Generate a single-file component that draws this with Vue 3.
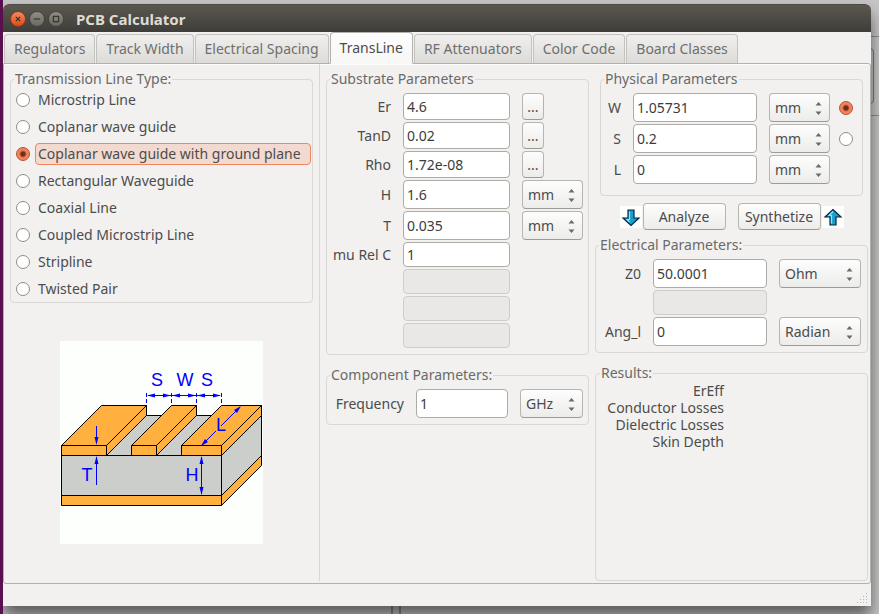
<script setup>
import { ref, reactive } from 'vue'

const tabs = [
  'Regulators', 'Track Width', 'Electrical Spacing', 'TransLine',
  'RF Attenuators', 'Color Code', 'Board Classes'
]
const activeTab = ref('TransLine')

const lineTypes = [
  'Microstrip Line', 'Coplanar wave guide', 'Coplanar wave guide with ground plane',
  'Rectangular Waveguide', 'Coaxial Line', 'Coupled Microstrip Line', 'Stripline', 'Twisted Pair'
]
const lineType = ref('Coplanar wave guide with ground plane')

const lengths = ['mm', 'cm', 'inch', 'mil']
const substrate = reactive([
  { id: 'er', label: 'Er', value: '4.6', kind: 'pick' },
  { id: 'tand', label: 'TanD', value: '0.02', kind: 'pick' },
  { id: 'rho', label: 'Rho', value: '1.72e-08', kind: 'pick' },
  { id: 'h', label: 'H', value: '1.6', kind: 'unit', unit: 'mm' },
  { id: 't', label: 'T', value: '0.035', kind: 'unit', unit: 'mm' },
  { id: 'mur', label: 'mu Rel C', value: '1', kind: 'plain' },
  { id: 's7', label: '', value: '', kind: 'off' },
  { id: 's8', label: '', value: '', kind: 'off' },
  { id: 's9', label: '', value: '', kind: 'off' }
])
const frequency = reactive({ value: '1', unit: 'GHz' })
const physical = reactive([
  { id: 'w', label: 'W', value: '1.05731', unit: 'mm', solvable: true },
  { id: 's', label: 'S', value: '0.2', unit: 'mm', solvable: true },
  { id: 'l', label: 'L', value: '0', unit: 'mm', solvable: false }
])
const solveFor = ref('w')
const electrical = reactive([
  { id: 'z0', label: 'Z0', value: '50.0001', kind: 'unit', unit: 'Ohm', units: ['Ohm', 'kOhm'] },
  { id: 'e2', label: '', value: '', kind: 'off' },
  { id: 'ang', label: 'Ang_l', value: '0', kind: 'unit', unit: 'Radian', units: ['Radian', 'Degree'] }
])
const results = ['ErEff', 'Conductor Losses', 'Dielectric Losses', 'Skin Depth']
</script>

<template>
  <div class="desktop">
    <div class="behind-right"></div>
    <div class="behind-tab"></div>
    <div class="behind-bottom"></div>
    <div class="window">
      <header class="titlebar">
        <button class="wm close" aria-label="Close">
          <svg viewBox="0 0 16 16"><path d="M5.500 5.500l5 5M10.500 5.500l-5 5" /></svg>
        </button>
        <button class="wm" aria-label="Minimize">
          <svg viewBox="0 0 16 16"><path d="M4.500 8h7" /></svg>
        </button>
        <button class="wm" aria-label="Maximize">
          <svg viewBox="0 0 16 16"><path d="M5 5h6v6h-6z" /></svg>
        </button>
        <h1>PCB Calculator</h1>
      </header>

      <nav class="tabs" role="tablist">
        <button
          v-for="tab in tabs" :key="tab" role="tab" class="tab"
          :class="{ active: tab === activeTab }" :aria-selected="tab === activeTab"
          @click="activeTab = tab"
        >{{ tab }}</button>
      </nav>

      <main class="panel">
        <section class="col types">
          <fieldset>
            <legend>Transmission Line Type:</legend>
            <div class="type-list">
              <label v-for="t in lineTypes" :key="t" class="type">
                <input v-model="lineType" type="radio" name="line-type" :value="t" />
                <span>{{ t }}</span>
              </label>
            </div>
          </fieldset>
          <div class="picture">
            <svg class="diagram" viewBox="0 0 203 203">
              <g stroke="#000" stroke-width="1">
                <path class="sub" d="M1.500 114.500L41.500 74.500H201.500V115.500L161.500 155.500H1.500z" />
                <path class="paper" d="M86.500 64V74.500H111.500L116 64z" stroke="none" />
                <path class="sub" d="M161.500 114.500L201.500 74.500V115.500L161.500 154.500z" />
                <path class="cu" d="M1.500 154.500H161.500V164.500H1.500z" />
                <path class="cu" d="M161.500 154.500L201.500 114.500V124.500L161.500 164.500z" />
                <path class="cu" d="M1.500 104.500L41.500 64.500H86.500L46.500 104.500z" />
                <path class="cu" d="M46.500 104.500L86.500 64.500V74.500L46.500 114.500z" />
                <path class="cu" d="M1.500 104.500H46.500V114.500H1.500z" />
                <path class="paper" d="M136.500 64V74.500H151.500L162 64z" stroke="none" />
                <path fill="none" d="M86.500 74.500H101.500M136.500 74.500H151.500" />
                <path class="cu" d="M71.500 104.500L111.500 64.500H136.500L96.500 104.500z" />
                <path class="cu" d="M96.500 104.500L136.500 64.500V74.500L96.500 114.500z" />
                <path class="cu" d="M71.500 104.500H96.500V114.500H71.500z" />
                <path class="cu" d="M121.500 104.500L161.500 64.500H201.500L161.500 104.500z" />
                <path class="cu" d="M161.500 104.500L201.500 64.500V74.500L161.500 114.500z" />
                <path class="cu" d="M121.500 104.500H161.500V114.500H121.500z" />
                <path fill="none" d="M1.500 114.500H161.500V154.500M1.500 114.500V154.500" />
              </g>
              <g stroke="#00f" stroke-width="1" fill="none">
                <path d="M86.500 52v13M111.500 52v13M136.500 52v13M161.500 52v13" stroke-dasharray="4 2" />
                <path d="M88 54.500H160" />
                <path d="M36.500 85V102M36.500 116V144M141.500 116V153" />
                <path d="M142 104L156 90M161 85L180 66" />
              </g>
              <g fill="#00f">
                <path d="M87 54.500l8-2v4zM111 54.500l-8-2v4zM112 54.500l8-2v4zM136 54.500l-8-2v4zM137 54.500l8-2v4zM161 54.500l-8-2v4z" />
                <path d="M36.500 104l-2-8h4zM36.500 115l-2 8h4zM141.500 115l-2 8h4zM141.500 154l-2-8h4z" />
                <path d="M141 105l4-7 3 3zM181 65l-7 4 3 3z" />
              </g>
              <g class="dim">
                <text x="97" y="45">S</text>
                <text x="125" y="45">W</text>
                <text x="147" y="45">S</text>
                <text x="161" y="90">L</text>
                <text x="27" y="140">T</text>
                <text x="132" y="140">H</text>
              </g>
            </svg>
          </div>
        </section>

        <section class="col middle">
          <fieldset>
            <legend>Substrate Parameters</legend>
            <div class="grid substrate">
              <template v-for="row in substrate" :key="row.id">
                <label :for="row.id">{{ row.label }}</label>
                <input :id="row.id" v-model="row.value" type="text" :class="row.kind" :disabled="row.kind === 'off'" />
                <button v-if="row.kind === 'pick'" class="btn pick" :aria-label="'Choose ' + row.label">...</button>
                <span v-else-if="row.kind === 'unit'" class="select">
                  <select v-model="row.unit" :aria-label="row.label + ' unit'">
                    <option v-for="u in lengths" :key="u">{{ u }}</option>
                  </select>
                  <svg viewBox="0 0 7 13"><path d="M3.500 0L6.500 3.500h-6zM3.500 13L.5 9.500h6z" /></svg>
                </span>
                <span v-else></span>
              </template>
            </div>
          </fieldset>
          <fieldset>
            <legend>Component Parameters:</legend>
            <div class="grid frequency">
              <label for="freq">Frequency</label>
              <input id="freq" v-model="frequency.value" type="text" class="unit" />
              <span class="select">
                <select v-model="frequency.unit" aria-label="Frequency unit">
                  <option>GHz</option>
                  <option>MHz</option>
                </select>
                <svg viewBox="0 0 7 13"><path d="M3.500 0L6.500 3.500h-6zM3.500 13L.5 9.500h6z" /></svg>
              </span>
            </div>
          </fieldset>
        </section>

        <section class="col right">
          <fieldset class="physical-box">
            <legend>Physical Parameters</legend>
            <div class="grid physical">
              <template v-for="row in physical" :key="row.id">
                <label :for="'p-' + row.id">{{ row.label }}</label>
                <input :id="'p-' + row.id" v-model="row.value" type="text" class="unit" />
                <span class="select">
                  <select v-model="row.unit" :aria-label="row.label + ' unit'">
                    <option v-for="u in lengths" :key="u">{{ u }}</option>
                  </select>
                  <svg viewBox="0 0 7 13"><path d="M3.500 0L6.500 3.500h-6zM3.500 13L.5 9.500h6z" /></svg>
                </span>
                <input v-if="row.solvable" v-model="solveFor" type="radio" name="solve" :value="row.id" :aria-label="'Solve for ' + row.label" />
                <span v-else></span>
              </template>
            </div>
          </fieldset>

          <div class="actions">
            <svg class="arrow" viewBox="0 0 22 22">
              <path d="M8 4h6v8h5l-8 7.500L3 12h5z" />
              <path class="shine" d="M9.500 5.500v8H7l2.500 2.500" />
            </svg>
            <button class="btn">Analyze</button>
            <button class="btn second">Synthetize</button>
            <svg class="arrow" viewBox="0 0 22 22">
              <path d="M8 19h6v-8h5l-8-7.500L3 11h5z" />
              <path class="shine" d="M9.500 17.500V9.500H7l4-4" />
            </svg>
          </div>

          <fieldset>
            <legend>Electrical Parameters:</legend>
            <div class="grid electrical">
              <template v-for="row in electrical" :key="row.id">
                <label :for="row.id">{{ row.label }}</label>
                <input :id="row.id" v-model="row.value" type="text" :class="row.kind" :disabled="row.kind === 'off'" />
                <span v-if="row.kind === 'unit'" class="select">
                  <select v-model="row.unit" :aria-label="row.label + ' unit'">
                    <option v-for="u in row.units" :key="u">{{ u }}</option>
                  </select>
                  <svg viewBox="0 0 7 13"><path d="M3.500 0L6.500 3.500h-6zM3.500 13L.5 9.500h6z" /></svg>
                </span>
                <span v-else></span>
              </template>
            </div>
          </fieldset>

          <fieldset class="results-box">
            <legend>Results:</legend>
            <ul class="results">
              <li v-for="r in results" :key="r">{{ r }}</li>
            </ul>
          </fieldset>
        </section>
      </main>

      <footer class="status">
        <svg class="grip" viewBox="0 0 12 12">
          <path d="M9 0h1v1h-1zM6 3h1v1H6zM9 3h1v1h-1zM3 6h1v1H3zM6 6h1v1H6zM9 6h1v1h-1zM0 9h1v1H0zM3 9h1v1H3zM6 9h1v1H6zM9 9h1v1h-1z" />
        </svg>
      </footer>
    </div>
  </div>
</template>

<style>
body {
  background: #c6c6c6;
}
</style>

<style scoped>
* {
  box-sizing: border-box;
}
.desktop {
  position: relative;
  display: flex;
  min-height: 100vh;
  padding: 4px 8px 8px 0;
  border-left: 3px solid #5a1050;
  overflow: hidden;
  font-family: "Noto Sans", sans-serif;
  font-size: 14px;
  line-height: 18px;
  color: #4c4c4c;
}
button, input, select {
  font: inherit;
  color: inherit;
  margin: 0;
}
.behind-right {
  position: absolute;
  top: 36px;
  right: 0;
  width: 40px;
  height: 80px;
  border-top: 1px solid #8e8e8e;
  border-bottom: 1px solid #8e8e8e;
}
.behind-tab {
  position: absolute;
  top: 48px;
  right: 5px;
  width: 20px;
  height: 56px;
  border: 1px solid #777;
  border-radius: 4px;
}
.behind-bottom {
  position: absolute;
  bottom: 0;
  left: 388px;
  width: 10px;
  height: 8px;
  border: solid #8c8c8c;
  border-width: 0 2px;
}
.window {
  position: relative;
  flex: 1;
  min-width: 0;
  display: flex;
  flex-direction: column;
  background: #f2f1ef;
  border-radius: 6px 6px 0 0;
  box-shadow: 0 10px 16px rgba(0, 0, 0, 0.55);
}
.titlebar {
  display: flex;
  align-items: center;
  gap: 3px;
  height: 28px;
  padding: 0 7px;
  border-radius: 6px 6px 0 0;
  border-top: 1px solid #4d4a44;
  background: linear-gradient(#5b584f, #3e3d39);
}
.titlebar h1 {
  margin: 0 0 0 9px;
  font-size: 15px;
  font-weight: 700;
  color: #dfdbd2;
}
.wm {
  width: 16px;
  height: 16px;
  padding: 0;
  border: 1px solid #45433c;
  border-radius: 50%;
  background: linear-gradient(#8f8d86, #6a6861);
}
.wm.close {
  border-color: #8a3a1c;
  background: linear-gradient(#f58a61, #df4a16);
}
.wm svg {
  display: block;
  width: 14px;
  height: 14px;
  fill: none;
  stroke: #37352f;
  stroke-width: 1.4;
}
.tabs {
  display: flex;
  align-items: flex-end;
  gap: 1px;
  height: 32px;
  padding-left: 1px;
}
.tab {
  height: 30px;
  padding: 0 9px;
  border: 1px solid #c4c2be;
  border-bottom-color: #b3b1ad;
  border-radius: 4px 4px 0 0;
  background: linear-gradient(#f0efed, #dddbd8);
  color: #6f6f6f;
  white-space: nowrap;
}
.tab.active {
  position: relative;
  height: 32px;
  border-color: #b3b1ad;
  border-bottom-color: #f9f9f8;
  background: linear-gradient(#fdfdfd, #f7f7f6);
  color: #4c4c4c;
}
.panel {
  flex: 1;
  display: grid;
  grid-template-columns: 316fr 274fr 276fr;
  margin-top: -1px;
  border: 1px solid #b3b1ad;
  border-radius: 0 3px 3px 3px;
  padding-bottom: 2px;
  box-shadow: inset 0 1px #fcfcfc;
}
.col {
  display: flex;
  flex-direction: column;
  gap: 11px;
  min-width: 0;
}
.types {
  gap: 0;
  padding: 6px 6px 0;
  border-right: 1px solid #d9d8d5;
}
.middle {
  padding: 6px 5px 0 6px;
}
.right {
  gap: 0;
  padding: 6px 2px 0 1px;
}
fieldset {
  min-width: 0;
  margin: 0;
  padding: 5px 5px 6px;
  border: 1px solid #d9d8d5;
  border-radius: 4px;
}
legend {
  margin-left: -2px;
  padding: 0 1px;
  line-height: 18px;
  color: #6a6a6a;
}
.types fieldset {
  padding: 1px 1px 2px 5px;
}
.type-list {
  display: grid;
  gap: 5px;
}
.type {
  display: flex;
  align-items: center;
  gap: 5px;
  height: 22px;
  white-space: nowrap;
}
.type span {
  flex: 1;
  padding: 0 2px;
  line-height: 20px;
  border: 1px solid transparent;
  border-radius: 4px;
}
.type input:checked + span {
  border-color: #f0875e;
  background: #f2dad0;
}
input[type="radio"] {
  appearance: none;
  flex: none;
  width: 14px;
  height: 14px;
  border: 1px solid #8f8d8a;
  border-radius: 50%;
  background: #fff;
}
input[type="radio"]:checked {
  border-color: #b4502e;
  background: radial-gradient(circle, #693020 0 2px, #c8603c 3px, #f2845c 4px);
}
.picture {
  flex: 1;
  display: flex;
  align-items: center;
  justify-content: center;
}
.diagram {
  width: 203px;
  height: 203px;
  background: #fcfffc;
}
.cu {
  fill: #ffb03e;
}
.sub {
  fill: #cccecc;
}
.paper {
  fill: #fcfffc;
}
.dim {
  font: 18px "Liberation Sans", sans-serif;
  fill: #00f;
  text-anchor: middle;
}
.grid {
  display: grid;
  align-items: center;
  gap: 2px 12px;
}
.grid label {
  text-align: right;
  white-space: nowrap;
}
.substrate {
  grid-template-columns: 58px 1fr 61px;
  padding: 0 0 0 1px;
}
.frequency {
  grid-template-columns: 71px 1fr 63px;
  padding: 0 0 0 1px;
}
.electrical {
  grid-template-columns: 39px 1fr 82px;
  padding: 0 1px;
}
.physical {
  grid-template-columns: 15px 1fr 61px 27px;
  column-gap: 0;
}
.physical-box {
  margin: 0 5px;
  padding-bottom: 11px;
}
.physical input[type="text"] {
  width: auto;
  margin: 0 12px;
}
.physical input[type="radio"] {
  margin-left: 9px;
}
input[type="text"] {
  width: 100%;
  min-width: 0;
  height: 25px;
  padding: 0 3px;
  border: 1px solid #aeaaa5;
  border-radius: 4px;
  background: #fff;
  color: #3c3c3c;
}
input.pick {
  height: 27px;
}
input.unit {
  height: 29px;
}
input[type="text"]:disabled {
  border-color: #cfcdca;
  background: #e9e8e6;
}
.btn, .select select {
  border: 1px solid #b8b5b0;
  border-bottom-color: #9d9a95;
  border-radius: 4px;
  background: linear-gradient(#fdfdfd, #ececea);
}
.btn {
  height: 27px;
  padding: 0;
}
.pick.btn {
  width: 22px;
}
.select {
  position: relative;
  display: block;
}
.select select {
  display: block;
  appearance: none;
  width: 100%;
  height: 29px;
  padding: 0 16px 0 5px;
}
.select svg {
  position: absolute;
  top: 9px;
  right: 8px;
  width: 7px;
  height: 13px;
  fill: #6a6a6a;
  pointer-events: none;
}
.actions {
  display: flex;
  align-items: center;
  justify-content: center;
  gap: 1px;
  margin: 7px 0 6px;
}
.actions .btn {
  width: 83px;
}
.actions .second {
  margin-left: 11px;
}
.arrow {
  width: 22px;
  height: 22px;
  background: #fcfffc;
  fill: #18a0cc;
  stroke: #0b2140;
  stroke-width: 1.2;
}
.arrow .shine {
  fill: none;
  stroke: #8fe4f5;
}
.results-box {
  flex: 1;
  margin-top: 11px;
  padding: 0 6px;
}
.results {
  width: 122px;
  margin: 0;
  padding: 0;
  list-style: none;
  text-align: right;
  line-height: 17px;
  white-space: nowrap;
}
.status {
  display: flex;
  align-items: flex-end;
  justify-content: flex-end;
  height: 22px;
  padding: 0 2px 1px;
}
.grip {
  width: 12px;
  height: 12px;
  fill: #b9b7b3;
}
</style>
